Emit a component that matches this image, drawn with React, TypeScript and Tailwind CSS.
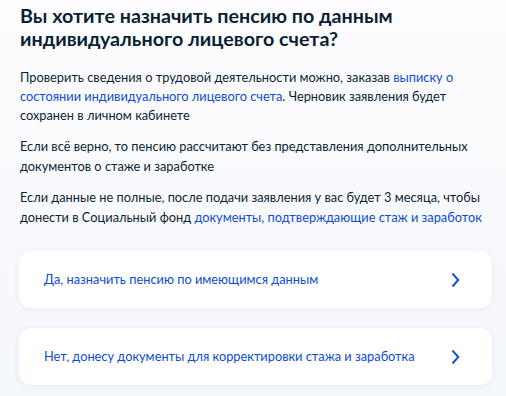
import React from "react";

const Chevron = () => (
  <svg width="8" height="14" viewBox="0 0 8 14" fill="none" className="shrink-0">
    <path d="M1.2 1.3L6.3 7L1.2 12.7" stroke="#0d4cd3" strokeWidth="2" strokeLinecap="square" strokeLinejoin="miter" />
  </svg>
);

export default function App() {
  return (
    <div
      className="w-[506px] h-[396px] overflow-hidden bg-[linear-gradient(180deg,#fdfdff_0%,#f9fafd_50%,#f3f6fb_100%)] text-[#0b1f33]"
      style={{ fontFamily: "Lato, 'Noto Sans', sans-serif" }}
    >
      <div className="pl-[20px] pr-[16px] pt-[4px]">
        <h1 className="text-[19.7px] leading-[23.4px] font-bold">
          Вы хотите назначить пенсию по данным индивидуального лицевого счета?
        </h1>
        <p className="mt-[17px] text-[12.8px] leading-[19.2px]">
          Проверить сведения о трудовой деятельности можно, заказав{" "}
          <span className="text-[#0d4cd3]">выписку о состоянии индивидуального лицевого счета</span>. Черновик заявления
          будет сохранен в личном кабинете
        </p>
        <p className="mt-[12px] text-[12.8px] leading-[19.2px]">
          Если всё верно, то пенсию рассчитают без представления дополнительных документов о стаже и заработке
        </p>
        <p className="mt-[12.5px] text-[12.8px] leading-[19.2px]">
          Если данные не полные, после подачи заявления у вас будет 3 месяца, чтобы донести в Социальный фонд{" "}
          <span className="text-[#0d4cd3]">документы, подтверждающие стаж и заработок</span>
        </p>
      </div>
      <div className="mt-[24.5px] pl-[19px] pr-[14.3px] flex flex-col gap-[20px]">
        <div className="h-[57px] bg-white rounded-[12px] shadow-[0_1px_6px_rgba(30,60,140,0.07)] flex items-center justify-between pl-[25px] pr-[31.5px]">
          <span className="text-[12.8px] text-[#0d4cd3]">Да, назначить пенсию по имеющимся данным</span>
          <Chevron />
        </div>
        <div className="h-[57px] bg-white rounded-[12px] shadow-[0_1px_6px_rgba(30,60,140,0.07)] flex items-center justify-between pl-[25px] pr-[31.5px]">
          <span className="text-[12.8px] text-[#0d4cd3]">Нет, донесу документы для корректировки стажа и заработка</span>
          <Chevron />
        </div>
      </div>
    </div>
  );
}
